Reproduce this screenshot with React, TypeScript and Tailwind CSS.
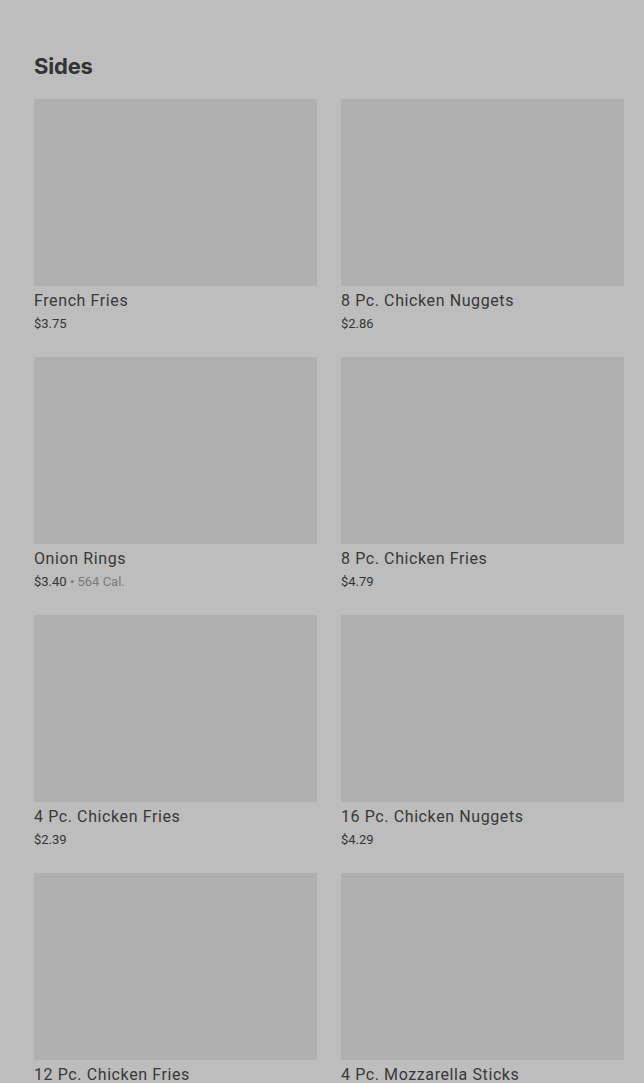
import React from "react";

const items: { name: string; price: string; cal?: string }[] = [
  { name: "French Fries", price: "$3.75" },
  { name: "8 Pc. Chicken Nuggets", price: "$2.86" },
  { name: "Onion Rings", price: "$3.40", cal: "564 Cal." },
  { name: "8 Pc. Chicken Fries", price: "$4.79" },
  { name: "4 Pc. Chicken Fries", price: "$2.39" },
  { name: "16 Pc. Chicken Nuggets", price: "$4.29" },
  { name: "12 Pc. Chicken Fries", price: "$3.99" },
  { name: "4 Pc. Mozzarella Sticks", price: "$2.49" },
];

export default function App() {
  return (
    <div className="w-[644px] h-[1083px] overflow-hidden bg-[#bdbdbd]" style={{ fontFamily: "Roboto, 'Liberation Sans', sans-serif" }}>
      <div className="pl-[34px] pr-[20px]">
        <div className="h-[3px] overflow-hidden">
          <div className="-mt-[13px] text-[13px] leading-[16px] text-[#9a9a9a]">$12.49</div>
        </div>
        <h2 className="mt-[49px] text-[22px] leading-[28px] font-bold text-[#333333] tracking-[-0.2px]" style={{ fontFamily: "Inter, 'Liberation Sans', sans-serif" }}>
          Sides
        </h2>
        <div className="mt-[19px] grid grid-cols-2 gap-x-[24px] gap-y-[24px]">
          {items.map((it) => (
            <div key={it.name} className="flex flex-col">
              <div className="h-[187px] bg-[#b0b0b0]" />
              <div className="mt-[5px] text-[16px] leading-[20px] text-[#383838] tracking-[0.6px]">{it.name}</div>
              <div className="mt-[4px] text-[13px] leading-[18px] text-[#353535]">
                {it.price}
                {it.cal && <span className="text-[#7a7a7a]"> • {it.cal}</span>}
              </div>
            </div>
          ))}
        </div>
      </div>
    </div>
  );
}
